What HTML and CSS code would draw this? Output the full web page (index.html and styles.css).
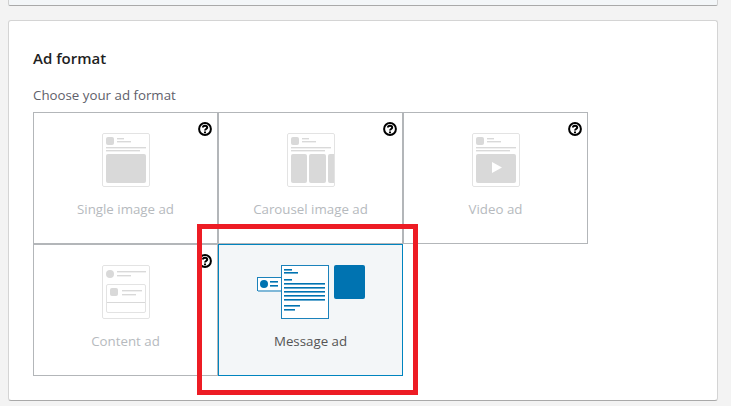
FILE: index.html
```html
<!DOCTYPE html>
<html lang="en">
<head>
  <meta charset="UTF-8" />
  <meta name="viewport" content="width=device-width, initial-scale=1.0"/>
  <title>Ad format</title>
  <link rel="stylesheet" href="styles.css">
</head>
<body>

<div class="top-card"></div>

<div class="card">
  <h2 class="card-title">Ad format</h2>
  <p class="card-label">Choose your ad format</p>

  <div class="format-grid">
    <div class="tile">
      <svg class="thumb" width="48" height="54" viewBox="0 0 48 54">
        <rect class="frame" x="0.5" y="0.5" width="47" height="53" rx="1.5"/>
        <rect class="fill" x="4" y="4" width="8" height="8" rx="2"/>
        <rect class="fill" x="15" y="5" width="7" height="1.4"/>
        <rect class="fill" x="15" y="8" width="14" height="1.4"/>
        <rect class="fill" x="4" y="14" width="40" height="1.4"/>
        <rect class="fill" x="4" y="17" width="34" height="1.4"/>
        <rect class="fill" x="4" y="21" width="40" height="29" rx="2"/>
      </svg>
      <span class="tile-name">Single image ad</span>
      <svg class="help" width="14" height="14" viewBox="0 0 14 14"><circle cx="7" cy="7" r="5.9"/><path d="M4.9 5.6C4.9 3 9.2 3 9.2 5.5C9.2 7 7 7 7 8.6"/><path d="M7 9.6V11.2"/></svg>
    </div>

    <div class="tile">
      <svg class="thumb" width="48" height="54" viewBox="0 0 48 54">
        <rect class="frame" x="0.5" y="0.5" width="47" height="53" rx="1.5"/>
        <rect class="fill" x="4" y="4" width="8" height="8" rx="2"/>
        <rect class="fill" x="15" y="5" width="7" height="1.4"/>
        <rect class="fill" x="15" y="8" width="14" height="1.4"/>
        <rect class="fill" x="4" y="14" width="40" height="1.4"/>
        <rect class="fill" x="4" y="17" width="34" height="1.4"/>
        <rect class="fill" x="4" y="21" width="16" height="29" rx="2"/>
        <rect class="fill" x="22" y="21" width="17" height="29" rx="2"/>
        <path class="fill" d="M47 21H43a2 2 0 0 0-2 2V48a2 2 0 0 0 2 2H47Z"/>
      </svg>
      <span class="tile-name">Carousel image ad</span>
      <svg class="help" width="14" height="14" viewBox="0 0 14 14"><circle cx="7" cy="7" r="5.9"/><path d="M4.9 5.6C4.9 3 9.2 3 9.2 5.5C9.2 7 7 7 7 8.6"/><path d="M7 9.6V11.2"/></svg>
    </div>

    <div class="tile">
      <svg class="thumb" width="48" height="54" viewBox="0 0 48 54">
        <rect class="frame" x="0.5" y="0.5" width="47" height="53" rx="1.5"/>
        <rect class="fill" x="4" y="4" width="8" height="8" rx="2"/>
        <rect class="fill" x="15" y="5" width="7" height="1.4"/>
        <rect class="fill" x="15" y="8" width="14" height="1.4"/>
        <rect class="fill" x="4" y="14" width="40" height="1.4"/>
        <rect class="fill" x="4" y="17" width="34" height="1.4"/>
        <rect class="fill" x="4" y="21" width="40" height="29" rx="2"/>
        <path class="play" d="M20 29L30 34.500L20 40Z"/>
      </svg>
      <span class="tile-name">Video ad</span>
      <svg class="help" width="14" height="14" viewBox="0 0 14 14"><circle cx="7" cy="7" r="5.9"/><path d="M4.9 5.6C4.9 3 9.2 3 9.2 5.5C9.2 7 7 7 7 8.6"/><path d="M7 9.6V11.2"/></svg>
    </div>

    <div class="tile">
      <svg class="thumb" width="48" height="54" viewBox="0 0 48 54">
        <rect class="frame" x="0.500" y="0.500" width="47" height="53" rx="1.5"/>
        <circle class="fill" cx="8" cy="9" r="4"/>
        <rect class="fill" x="15" y="6" width="29" height="1.4"/>
        <rect class="fill" x="15" y="10" width="14" height="1.4"/>
        <rect class="frame" x="4.500" y="19.500" width="39" height="28" rx="1.5"/>
        <rect class="fill" x="8" y="23" width="8" height="8" rx="2"/>
        <rect class="fill" x="20" y="25" width="20" height="1.4"/>
        <rect class="fill" x="20" y="29" width="14" height="1.4"/>
        <rect class="fill" x="5" y="37" width="38" height="1"/>
      </svg>
      <span class="tile-name">Content ad</span>
      <svg class="help" width="14" height="14" viewBox="0 0 14 14"><circle cx="7" cy="7" r="5.9"/><path d="M4.9 5.6C4.9 3 9.2 3 9.2 5.5C9.2 7 7 7 7 8.6"/><path d="M7 9.6V11.2"/></svg>
    </div>

    <div class="tile tile-selected">
      <svg class="thumb" width="108" height="54" viewBox="0 0 108 54">
        <rect class="msg-side" x="0.500" y="12.500" width="24" height="13"/>
        <rect class="msg-soft" x="1" y="25" width="24" height="2"/>
        <circle class="msg-fill" cx="7" cy="19" r="4"/>
        <rect class="msg-fill" x="13" y="16" width="8" height="1.6"/>
        <rect class="msg-fill" x="13" y="20" width="8" height="1.6"/>
        <rect class="msg-page" x="24.500" y="0.500" width="47" height="53"/>
        <rect class="msg-fill" x="27" y="4" width="8" height="1.6"/>
        <rect class="msg-fill" x="27" y="7" width="14" height="1.6"/>
        <rect class="msg-fill" x="27" y="14" width="8" height="1.6"/>
        <rect class="msg-fill" x="27" y="18" width="41" height="1.6"/>
        <rect class="msg-fill" x="27" y="22" width="41" height="1.6"/>
        <rect class="msg-fill" x="27" y="26" width="41" height="1.6"/>
        <rect class="msg-fill" x="27" y="30" width="41" height="1.6"/>
        <rect class="msg-fill" x="27" y="34" width="41" height="1.6"/>
        <rect class="msg-fill" x="27" y="40" width="16" height="1.6"/>
        <rect class="msg-fill" x="27" y="44" width="11" height="1.6"/>
        <rect class="msg-fill" x="77" y="0" width="31" height="34" rx="2"/>
      </svg>
      <span class="tile-name">Message ad</span>
    </div>
  </div>

  <!-- red box drawn over the screenshot -->
  <div class="callout"></div>
</div>

</body>
</html>
```

FILE: styles.css
```css
* {
  box-sizing: border-box;
}

body {
  font-family: 'Open Sans', 'Noto Sans', sans-serif;
  background: #f3f3f3;
  margin: 0;
  height: 406px;
  overflow: hidden;
}

.top-card {
  height: 6px;
  margin: 0 13px 14px 8px;
  background: #f3f6f8;
  border: 1px solid #d0d0d0;
  border-top: none;
  border-bottom: 1px solid #a9a9a9;
  border-radius: 0 0 2px 2px;
}

.card {
  position: relative;
  height: 381px;
  margin: 0 13px 0 8px;
  padding: 27px 24px 0;
  background: white;
  border: 1px solid #d4d4d4;
  border-bottom-color: #a9a9a9;
  border-radius: 3px;
}

.card-title {
  margin: 0;
  font-size: 15px;
  line-height: 20px;
  font-weight: 600;
  color: #1f1f1f;
}

.card-label {
  margin: 19px 0 8px;
  font-size: 13.3px;
  line-height: 17px;
  color: #5f5f6b;
}

.format-grid {
  display: grid;
  grid-template-columns: repeat(3, 185px);
  grid-auto-rows: 132px;
}

.tile {
  position: relative;
  display: flex;
  flex-direction: column;
  align-items: center;
  padding-top: 20px;
  border: 1px solid #b3b6b9;
}

.tile-selected {
  background: #f3f6f8;
  border-color: #0084bf;
}

.thumb {
  display: block;
}

.tile-name {
  margin-top: 13px;
  font-size: 13.3px;
  line-height: 18px;
  color: #b6babe;
}

.tile-selected .tile-name {
  color: #555;
}

.help {
  position: absolute;
  top: 9px;
  right: 5px;
  fill: none;
  stroke: #000;
  stroke-width: 2;
}

.frame {
  fill: white;
  stroke: #e3e3e3;
}

.fill {
  fill: #d9d9d9;
}

.play {
  fill: white;
}

.msg-fill {
  fill: #0073b1;
}

.msg-soft {
  fill: #7fb8d8;
}

.msg-side,
.msg-page {
  fill: white;
  stroke: #1b82bb;
}

.callout {
  position: absolute;
  left: 188px;
  top: 203px;
  width: 221px;
  height: 171px;
  border: 5px solid #ed1c24;
}
```
